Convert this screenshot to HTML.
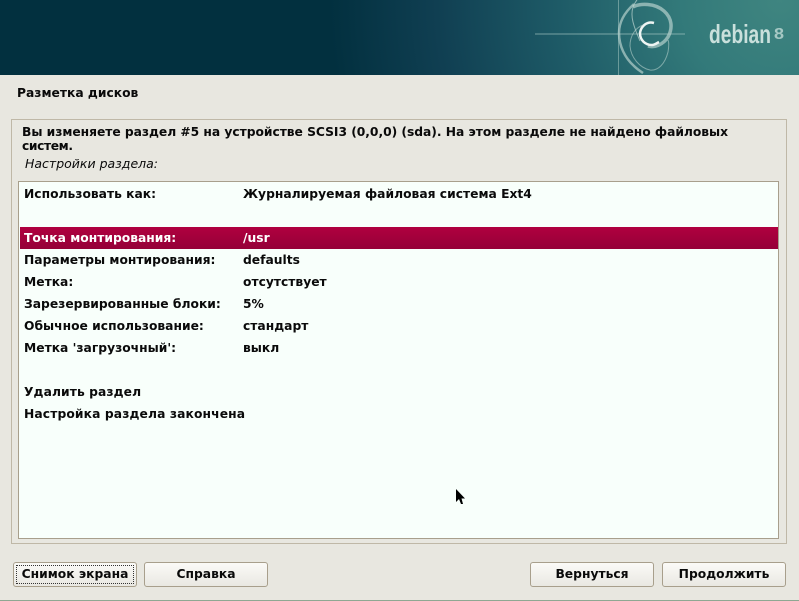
<!DOCTYPE html>
<html><head><meta charset="utf-8"><style>
html,body{margin:0;padding:0;background:#e8e7e0}
body{width:799px;height:601px;position:relative;overflow:hidden;font:bold 12.3px "DejaVu Sans",sans-serif;color:#0a0a0a}
.a{position:absolute;white-space:nowrap;line-height:16px}
.b{position:absolute;top:562px;height:23px;width:122px;border:1px solid #a89f8c;border-radius:3px;background:linear-gradient(#fbfaf7,#e9e8e2);text-align:center;line-height:22px}
</style></head><body>
<svg class="a" style="left:0;top:0" width="799" height="75" viewBox="0 0 799 75">
<defs><radialGradient id="g" gradientUnits="userSpaceOnUse" cx="780" cy="0" r="490">
<stop offset="0" stop-color="#3f8580"/><stop offset=".2" stop-color="#337a7a"/><stop offset=".45" stop-color="#1e5b67"/><stop offset=".7" stop-color="#103f52"/><stop offset=".92" stop-color="#02303f"/><stop offset="1" stop-color="#02303f"/></radialGradient></defs>
<rect width="799" height="75" fill="#02303f"/><rect width="799" height="75" fill="url(#g)"/>
<path d="M535 34H685" stroke="#a9c9c5" stroke-opacity=".65"/>
<path d="M618.500 0V75" stroke="#8fb5b2" stroke-opacity=".65"/>
<g fill="none" stroke="#b5d0cc">
<path d="M634 4C625 12 619 22 619 33C619 46 625 58 634 66C637 69 640 71 643 73" stroke-width="2.500" stroke-opacity=".7"/>
<path d="M633 7C640 3 655 3 664 11C672 18 673 28 668 37C663 45 654 48 648 46" stroke-width="3.500" stroke-opacity=".7"/>
<path d="M654 23C647 21 641 26 640 33C640 40 645 45 652 45C655 45 657 43 659 42" stroke="#eef5f3" stroke-width="2.500"/>
<path d="M637 0C632 6 631 14 633 22C635 30 638 36 640 41" stroke-width="1" stroke-opacity=".75"/>
<path d="M643 25C635 28 630 36 630 46C631 58 640 68 650 70C658 71 665 64 668 52C669 46 669 42 668 40" stroke-width="1" stroke-opacity=".6"/>
</g>
<text x="709" y="43" font-family="Liberation Sans" font-size="26" fill="#c9e0dc" textLength="62" lengthAdjust="spacingAndGlyphs">debian</text>
<text x="774" y="39" font-family="Liberation Sans" font-size="16" fill="#c9e0dc" fill-opacity=".75" textLength="10" lengthAdjust="spacingAndGlyphs">8</text>
</svg>
<div class="a" style="left:17px;top:85px">Разметка дисков</div>
<div class="a" style="left:11px;top:119px;width:774px;height:423px;border:1px solid #bfb8a7"></div>
<div class="a" style="left:22px;top:125px;letter-spacing:-.04px;line-height:14px">Вы изменяете раздел #5 на устройстве SCSI3 (0,0,0) (sda). На этом разделе не найдено файловых</div>
<div class="a" style="left:22px;top:139px;letter-spacing:-.4px;line-height:14px">систем.</div>
<div class="a" style="left:25px;top:156px;font-weight:normal;font-style:italic;font-size:12.5px">Настройки раздела:</div>
<div class="a" style="left:18px;top:181px;width:759px;height:356px;border:1px solid #a89f8c;background:#f8fffb"></div>
<div class="a" style="left:20px;top:227px;width:758px;height:22px;background:linear-gradient(#b0003f,#950038)"></div>
<div class="a" style="left:24px;top:186px">Использовать как:</div><div class="a" style="left:243px;top:186px">Журналируемая файловая система Ext4</div>
<div class="a" style="left:24px;top:230px;color:#fff">Точка монтирования:</div><div class="a" style="left:243px;top:230px;color:#fff">/usr</div>
<div class="a" style="left:24px;top:252px">Параметры монтирования:</div><div class="a" style="left:243px;top:252px">defaults</div>
<div class="a" style="left:24px;top:274px">Метка:</div><div class="a" style="left:243px;top:274px">отсутствует</div>
<div class="a" style="left:24px;top:296px">Зарезервированные блоки:</div><div class="a" style="left:243px;top:296px">5%</div>
<div class="a" style="left:24px;top:318px">Обычное использование:</div><div class="a" style="left:243px;top:318px">стандарт</div>
<div class="a" style="left:24px;top:340px">Метка 'загрузочный':</div><div class="a" style="left:243px;top:340px">выкл</div>
<div class="a" style="left:24px;top:384px;letter-spacing:.08px">Удалить раздел</div>
<div class="a" style="left:24px;top:406px;letter-spacing:.11px">Настройка раздела закончена</div>
<svg class="a" style="left:455px;top:488px" width="12" height="18"><path d="M1 1V14L4 11L6 16H8L6.500 10.500H10Z" fill="#000"/></svg>
<div class="b" style="left:13px"><span style="position:absolute;left:2px;top:2px;right:2px;bottom:2px;border:1px dotted #333"></span>Снимок экрана</div>
<div class="b" style="left:144px">Справка</div>
<div class="b" style="left:530px">Вернуться</div>
<div class="b" style="left:662px">Продолжить</div>
<div class="a" style="left:0;top:600px;width:799px;height:1px;background:#8fa792"></div>
</body></html>
